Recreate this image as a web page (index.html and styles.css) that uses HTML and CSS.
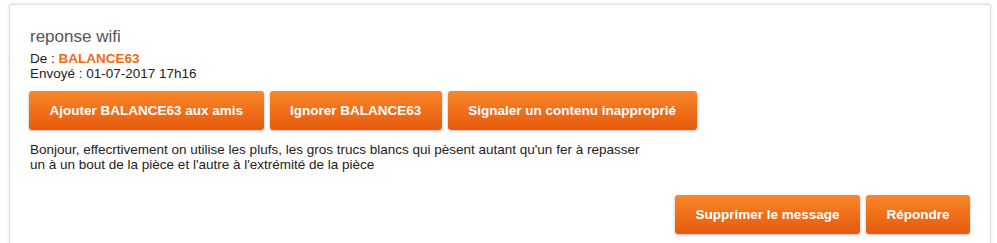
FILE: index.html
```html
<!DOCTYPE html>
<html lang="fr">
<head>
<meta charset="utf-8">
<link rel="stylesheet" href="styles.css">
</head>
<body>
<div class="card">
  <div class="title">reponse wifi</div>
  <div class="meta">De : <span class="user">BALANCE63</span></div>
  <div class="meta">Envoyé : 01-07-2017 17h16</div>
  <div class="actions">
    <button class="btn">Ajouter BALANCE63 aux amis</button>
    <button class="btn">Ignorer BALANCE63</button>
    <button class="btn">Signaler un contenu inapproprié</button>
  </div>
  <p class="body">Bonjour, effecrtivement on utilise les plufs, les gros trucs blancs qui pèsent autant qu'un fer à repasser<br>un à un bout de la pièce et l'autre à l'extrémité de la pièce</p>
  <div class="footer">
    <button class="btn">Supprimer le message</button>
    <button class="btn">Répondre</button>
  </div>
</div>
</body>
</html>
```
FILE: styles.css
```css
html, body {
  margin: 0;
  padding: 0;
  background: #ffffff;
}
body {
  font-family: "Liberation Sans", Arial, sans-serif;
  color: #222;
  padding: 4px 6px 0 9px;
}
.card {
  border: 1px solid #dcdcdc;
  border-radius: 3px;
  box-shadow: 0 0 4px rgba(0,0,0,0.12);
  padding: 22px 20px 30px 19px;
  height: 260px;
  box-sizing: border-box;
}
.title {
  font-size: 17px;
  line-height: 20px;
  color: #555;
  margin-bottom: 4px;
  padding-left: 1px;
}
.meta {
  font-size: 13.5px;
  line-height: 15px;
  color: #222;
  padding-left: 1px;
}
.user {
  color: #f26a10;
  font-weight: bold;
}
.actions {
  display: flex;
  gap: 6px;
  margin-top: 10px;
}
.btn {
  font-family: "Liberation Sans", Arial, sans-serif;
  font-size: 13.5px;
  font-weight: bold;
  color: #fff;
  border: none;
  border-radius: 3px;
  height: 39px;
  padding: 0 20.5px;
  background: linear-gradient(to bottom, #f8872b 0%, #f0701a 50%, #e65a0d 100%);
  box-shadow: 0 1px 3px rgba(0,0,0,0.28);
  cursor: pointer;
}
.body {
  font-size: 13.5px;
  line-height: 15px;
  margin: 12px 0 0 0;
  padding-left: 1px;
  color: #222;
}
.footer {
  display: flex;
  justify-content: flex-end;
  gap: 6px;
  margin-top: 23px;
}
```
